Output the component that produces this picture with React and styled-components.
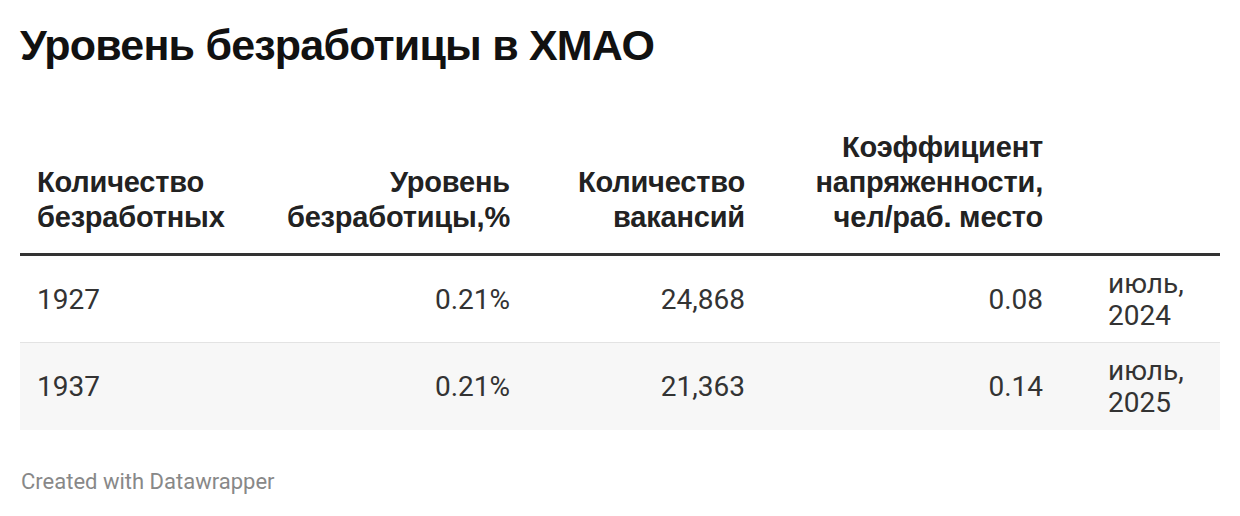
import React from 'react';
import styled, { createGlobalStyle } from 'styled-components';

const GlobalStyle = createGlobalStyle`
  html, body {
    margin: 0;
    padding: 0;
    background: #ffffff;
  }
`;

const rows = [
  { unemployed: '1927', rate: '0.21%', vacancies: '24,868', ratio: '0.08', period: 'июль, 2024' },
  { unemployed: '1937', rate: '0.21%', vacancies: '21,363', ratio: '0.14', period: 'июль, 2025' },
];

const App = () => {
  return (
    <>
      <GlobalStyle />
      <Page>
        <Title>Уровень безработицы в ХМАО</Title>
        <Table>
          <colgroup>
            <col style={{ width: '248px' }} />
            <col style={{ width: '259px' }} />
            <col style={{ width: '235px' }} />
            <col style={{ width: '298px' }} />
            <col style={{ width: '160px' }} />
          </colgroup>
          <thead>
            <tr>
              <Th>Количество безработных</Th>
              <Th align="right">Уровень безработицы,%</Th>
              <Th align="right">Количество вакансий</Th>
              <Th align="right">Коэффициент напряженности, чел/раб. место</Th>
              <Th wide />
            </tr>
          </thead>
          <tbody>
            {rows.map((r, i) => (
              <Row key={r.unemployed} striped={i % 2 === 1}>
                <Td>{r.unemployed}</Td>
                <Td align="right">{r.rate}</Td>
                <Td align="right">{r.vacancies}</Td>
                <Td align="right">{r.ratio}</Td>
                <Td wide>{r.period}</Td>
              </Row>
            ))}
          </tbody>
        </Table>
        <Footer>Created with Datawrapper</Footer>
      </Page>
    </>
  );
};

const Page = styled.div`
  padding: 20px 20px 0;
  width: 1200px;
`;

const Title = styled.h1`
  margin: 0;
  font-family: 'Liberation Sans', Arial, sans-serif;
  font-weight: 700;
  font-size: 43px;
  line-height: 50px;
  letter-spacing: -0.8px;
  color: #111;
`;

const Table = styled.table`
  margin-top: 60px;
  width: 1200px;
  table-layout: fixed;
  border-collapse: collapse;
  border-spacing: 0;
`;

const Th = styled.th`
  vertical-align: bottom;
  text-align: ${({ align }) => align || 'left'};
  padding: 0 17px 18px ${({ wide }) => (wide ? '48px' : '17px')};
  font-family: 'Liberation Sans', Arial, sans-serif;
  font-weight: 700;
  font-size: 29px;
  line-height: 35px;
  letter-spacing: -0.2px;
  color: #222;
  border-bottom: 3px solid #333;
`;

const Row = styled.tr`
  background: ${({ striped }) => (striped ? '#f7f7f7' : '#ffffff')};
  border-bottom: 1px solid ${({ striped }) => (striped ? '#f7f7f7' : '#e3e3e3')};
`;

const Td = styled.td`
  vertical-align: middle;
  text-align: ${({ align }) => align || 'left'};
  padding: 12px 17px 10px ${({ wide }) => (wide ? '48px' : '17px')};
  font-family: Roboto, 'Liberation Sans', sans-serif;
  font-size: 28px;
  line-height: 32px;
  color: #333;
`;

const Footer = styled.div`
  margin-top: 39px;
  font-family: Roboto, 'Liberation Sans', sans-serif;
  font-size: 22px;
  line-height: 26px;
  color: #888;
  padding-left: 1px;
`;

export default App;
